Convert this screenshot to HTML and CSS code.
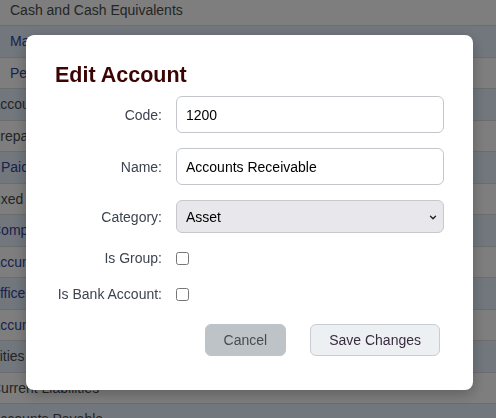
FILE: index.html
```html
<!DOCTYPE html>
<html lang="en">
<head>
    <meta charset="UTF-8">
    <meta name="viewport" content="width=device-width, initial-scale=1.0">
    <title>Chart of Accounts</title>
    <link rel="stylesheet" href="styles.css">
</head>
<body>

<!-- Accounts tree behind the dialog -->
<div class="accounts">
    <div class="row lvl2">Cash and Cash Equivalents</div>
    <div class="row lvl2 link">Main Bank Account</div>
    <div class="row lvl2 link">Petty Cash</div>
    <div class="row lvl1">Accounts Receivable</div>
    <div class="row lvl1">Prepaid Expenses</div>
    <div class="row lvl1b link">Paid in Advance</div>
    <div class="row lvl1c">Fixed Assets</div>
    <div class="row lvl1 link">Computer Equipment</div>
    <div class="row lvl1 link">Accumulated Depreciation</div>
    <div class="row lvl1c link">Office Equipment</div>
    <div class="row lvl1 link">Accumulated Depreciation</div>
    <div class="row lvl0">Liabilities</div>
    <div class="row lvl1">Current Liabilities</div>
    <div class="row lvl1">Accounts Payable</div>
</div>

<div class="backdrop">
    <div class="modal">
        <h2 class="modal-title">Edit Account</h2>
        <form class="account-form" onsubmit="return false;">
            <label class="label" for="code">Code:</label>
            <input class="input" id="code" type="text" value="1200">

            <label class="label" for="name">Name:</label>
            <input class="input" id="name" type="text" value="Accounts Receivable">

            <label class="label" for="category">Category:</label>
            <div class="select-wrap">
                <select class="select" id="category">
                    <option>Asset</option>
                    <option>Liability</option>
                    <option>Equity</option>
                    <option>Income</option>
                    <option>Expense</option>
                </select>
                <svg class="chevron" width="8" height="5" viewBox="0 0 8 5">
                    <path d="M1.5 1.2 L4 3.7 L6.5 1.2" fill="none" stroke="#222" stroke-width="1.4" stroke-linecap="round" stroke-linejoin="round"/>
                </svg>
            </div>

            <label class="label check-label" for="isGroup">Is Group:</label>
            <div class="check-cell"><input class="check" id="isGroup" type="checkbox"></div>

            <label class="label check-label" for="isBank">Is Bank Account:</label>
            <div class="check-cell"><input class="check" id="isBank" type="checkbox"></div>

            <div class="actions">
                <button class="btn btn-cancel" type="button">Cancel</button>
                <button class="btn btn-save" type="submit">Save Changes</button>
            </div>
        </form>
    </div>
</div>

</body>
</html>
```

FILE: styles.css
```css
body {
    margin: 0;
    background-color: white;
    font-family: "Liberation Sans", Arial, sans-serif;
    overflow: hidden;
}

/* background table */
.accounts {
    margin-top: -5.5px;
}
.row {
    height: 31.5px;
    box-sizing: border-box;
    display: flex;
    align-items: center;
    font-size: 14px;
    color: #4a4a4a;
    border-bottom: 1px solid #dadada;
    white-space: nowrap;
    background-color: #fdfdfd;
}
.row:nth-child(even) {
    background-color: #e4eefc;
}
.row.link {
    color: #34449a;
}
.lvl0 { text-indent: -33px; }
.lvl1 { text-indent: -9px; }
.lvl1b { text-indent: 1px; }
.lvl1c { text-indent: -11px; }
.lvl2 { padding-left: 10px; }

/* dialog */
.backdrop {
    position: fixed;
    top: 0;
    left: 0;
    right: 0;
    bottom: 0;
    background-color: rgba(0, 0, 0, 0.5);
    display: flex;
    justify-content: center;
    align-items: flex-start;
    padding: 35px 0 0 3px;
}
.modal {
    width: 447px;
    box-sizing: border-box;
    padding: 28px 29px 34px 29px;
    background-color: white;
    border-radius: 8px;
    box-shadow: 0 4px 14px rgba(0, 0, 0, 0.25);
}
.modal-title {
    margin: 0 0 9px 0;
    font-size: 21.5px;
    line-height: 24px;
    font-weight: bold;
    color: #3d0404;
}
.account-form {
    display: grid;
    grid-template-columns: 107px 268px;
    column-gap: 14px;
    row-gap: 15px;
}
.label {
    align-self: center;
    text-align: right;
    font-size: 14px;
    color: #3d4450;
    white-space: nowrap;
}
.check-label {
    margin-top: -2px;
}
.input {
    height: 37px;
    box-sizing: border-box;
    padding: 0 9px;
    font-family: inherit;
    font-size: 14px;
    color: black;
    border: 1px solid #c3c7cc;
    border-radius: 6px;
    background-color: white;
}
.select-wrap {
    position: relative;
    display: flex;
}
.select {
    flex: 1;
    height: 33px;
    box-sizing: border-box;
    padding: 0 9px;
    font-family: inherit;
    font-size: 14px;
    color: black;
    border: 1px solid #c6c8cc;
    border-radius: 6px;
    background-color: #e8e8ec;
    appearance: none;
    -webkit-appearance: none;
}
.chevron {
    position: absolute;
    right: 7px;
    top: 15px;
    pointer-events: none;
}
.check-cell {
    height: 21px;
    display: flex;
    align-items: center;
}
.check {
    margin: 0;
    width: 13px;
    height: 13px;
}
.actions {
    grid-column: 1 / 3;
    display: flex;
    justify-content: flex-end;
    gap: 24px;
    margin-top: 4px;
    padding-right: 4px;
}
.btn {
    height: 32px;
    padding: 0 18px;
    font-family: inherit;
    font-size: 14px;
    border-radius: 6px;
    cursor: pointer;
}
.btn-cancel {
    background-color: #bec3c7;
    border: 1px solid #bec3c7;
    color: #454c54;
}
.btn-save {
    background-color: #edf0f2;
    border: 1px solid #c8cdd2;
    color: #3a2c40;
}
.btn:hover {
    filter: brightness(0.97);
}
```
